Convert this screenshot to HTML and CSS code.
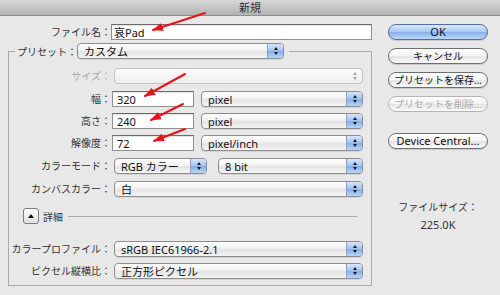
FILE: index.html
```html
<!DOCTYPE html>
<html lang="ja">
<head>
    <meta charset="UTF-8">
    <title>新規</title>
    <link rel="stylesheet" href="styles.css">
</head>
<body>
    <div class="titlebar">新規</div>

    <div class="dialog">
        <div class="main">
            <div class="row row-top">
                <label class="lbl" for="fname">ファイル名：</label>
                <input class="text-field fname" id="fname" type="text" value="哀Pad">
            </div>

            <fieldset class="group">
                <legend class="legend">
                    <div class="legend-inner">
                        <span class="legend-lbl">プリセット：</span>
                        <div class="popup preset">カスタム<span class="arrows"></span></div>
                    </div>
                </legend>

                <div class="row">
                    <span class="lbl off-lbl">サイズ：</span>
                    <div class="popup off grow"><span class="arrows"></span></div>
                </div>
                <div class="row">
                    <label class="lbl" for="w">幅：</label>
                    <input class="text-field num" id="w" type="text" value="320">
                    <div class="popup unit grow">pixel<span class="arrows"></span></div>
                </div>
                <div class="row tight">
                    <label class="lbl" for="h">高さ：</label>
                    <input class="text-field num" id="h" type="text" value="240">
                    <div class="popup unit grow">pixel<span class="arrows"></span></div>
                </div>
                <div class="row tight">
                    <label class="lbl" for="res">解像度：</label>
                    <input class="text-field num" id="res" type="text" value="72">
                    <div class="popup unit grow">pixel/inch<span class="arrows"></span></div>
                </div>
                <div class="row">
                    <span class="lbl">カラーモード：</span>
                    <div class="popup mode">RGB カラー<span class="arrows"></span></div>
                    <div class="popup depth grow">8 bit<span class="arrows"></span></div>
                </div>
                <div class="row">
                    <span class="lbl">カンバスカラー：</span>
                    <div class="popup grow">白<span class="arrows"></span></div>
                </div>

                <div class="row details">
                    <span class="toggle"></span>
                    <span class="details-text">詳細</span>
                    <span class="rule"></span>
                </div>

                <div class="row profile-row">
                    <span class="lbl">カラープロファイル：</span>
                    <div class="popup grow">sRGB IEC61966-2.1<span class="arrows"></span></div>
                </div>
                <div class="row tight">
                    <span class="lbl">ピクセル縦横比：</span>
                    <div class="popup grow">正方形ピクセル<span class="arrows"></span></div>
                </div>
            </fieldset>
        </div>

        <div class="side">
            <button class="btn ok">OK</button>
            <button class="btn">キャンセル</button>
            <button class="btn">プリセットを保存...</button>
            <button class="btn off">プリセットを削除...</button>
            <button class="btn btn-gap">Device Central...</button>

            <div class="fsize">ファイルサイズ：</div>
            <div class="fsize-val">225.0K</div>
        </div>
    </div>

    <!-- red annotation arrows drawn over the dialog -->
    <svg class="marks" viewBox="0 0 500 295" width="500" height="295">
        <defs>
            <marker id="head" viewBox="0 0 11 8" refX="10" refY="4" markerWidth="11" markerHeight="8" markerUnits="userSpaceOnUse" orient="auto">
                <path d="M0 0L11 4L0 8z" fill="#e8121a"/>
            </marker>
        </defs>
        <g stroke="#e8121a" stroke-width="2" stroke-linecap="round" marker-end="url(#head)">
            <line x1="205" y1="13" x2="153" y2="30"/>
            <line x1="185" y1="74" x2="145" y2="96"/>
            <line x1="183" y1="104" x2="151" y2="120"/>
            <line x1="185" y1="129" x2="154" y2="141"/>
        </g>
    </svg>
</body>
</html>
```

FILE: styles.css
```css
body {
    margin: 0;
    width: 500px;
    height: 295px;
    overflow: hidden;
    position: relative;
    background-color: #e8e8e8;
    font-family: "Noto Sans", "Noto Sans CJK JP", sans-serif;
    font-size: 11px;
    color: #222;
}

.titlebar {
    height: 15px;
    line-height: 15px;
    text-align: center;
    background: linear-gradient(#d8d8d8, #b3b3b3);
    border-bottom: 1px solid #8e8e8e;
    color: #333;
}

.dialog {
    display: flex;
    padding: 8px 0 0 8px;
}

.main {
    width: 364px;
}

.side {
    width: 100px;
    margin-left: 16px;
    display: flex;
    flex-direction: column;
}

/* form rows */

.row {
    display: flex;
    align-items: center;
    height: 16px;
    margin-top: 7px;
}

.row:first-of-type {
    margin-top: 0;
}

.row.tight {
    margin-top: 6px;
}

.row-top {
    margin-top: 0;
}

.lbl {
    flex: none;
    width: 102px;
    text-align: right;
    font-size: 10px;
    line-height: 16px;
    color: #333;
    white-space: nowrap;
}

.row-top .lbl {
    width: 103px;
}

.off-lbl {
    color: #a9a9a9;
}

.text-field {
    box-sizing: border-box;
    height: 16px;
    margin: 0;
    padding: 0 4px;
    border: 1px solid #8f8f8f;
    border-top-color: #6c6c6c;
    background: #fff;
    box-shadow: inset 0 1px 1px rgba(0, 0, 0, 0.12);
    font-family: "Noto Sans", "Noto Sans CJK JP", sans-serif;
    font-size: 11px;
    color: #111;
    outline: none;
}

.fname {
    width: 261px;
    padding-left: 2px;
}

.num {
    width: 82px;
    margin-left: 1px;
}

/* popup menus */

.popup {
    box-sizing: border-box;
    height: 16px;
    display: flex;
    align-items: center;
    margin-left: 3px;
    padding-left: 6px;
    border: 1px solid #8d8d8d;
    border-radius: 4px;
    background: linear-gradient(#ffffff, #f2f2f2 45%, #e3e3e3 55%, #f6f6f6);
    box-shadow: 0 1px 0 rgba(0, 0, 0, 0.08);
    color: #111;
    white-space: nowrap;
    overflow: hidden;
}

.grow {
    flex: 1;
}

.popup .arrows {
    flex: none;
    align-self: stretch;
    width: 15px;
    margin-left: auto;
    display: flex;
    flex-direction: column;
    align-items: center;
    justify-content: center;
    gap: 2px;
    background: linear-gradient(#d6e5fa, #a2c2f1 50%, #82abea 50%, #bad6f8);
    border-left: 1px solid #8aa0c8;
}

.popup .arrows::before,
.popup .arrows::after {
    content: "";
    border-left: 2px solid transparent;
    border-right: 2px solid transparent;
}

.popup .arrows::before {
    border-bottom: 3px solid #1a1a1a;
}

.popup .arrows::after {
    border-top: 3px solid #1a1a1a;
}

.popup.off {
    border-color: #c4c4c4;
    background: linear-gradient(#fbfbfb, #efefef);
    box-shadow: none;
}

.popup.off .arrows {
    background: none;
    border-left: none;
}

.popup.off .arrows::before {
    border-bottom-color: #a5a5a5;
}

.popup.off .arrows::after {
    border-top-color: #a5a5a5;
}

.unit {
    margin-left: 7px;
}

.mode {
    width: 93px;
}

.depth {
    margin-left: 11px;
}

/* preset group */

.group {
    margin: 3px 0 0;
    padding: 9px 8px 6px 0;
    border: 1px solid #a9a9a9;
    min-width: 0;
}

.legend {
    margin-left: 6px;
    padding: 0 5px 0 2px;
}

.legend-inner {
    display: flex;
    align-items: center;
    height: 16px;
}

.legend-lbl {
    font-size: 10px;
    color: #333;
    white-space: nowrap;
}

.preset {
    width: 207px;
    margin-left: 0;
}

.details {
    margin-top: 11px;
    padding-left: 14px;
}

.toggle {
    box-sizing: border-box;
    flex: none;
    width: 16px;
    height: 16px;
    display: flex;
    align-items: center;
    justify-content: center;
    border: 1px solid #7a7a7a;
    border-radius: 3px;
    background: linear-gradient(#ffffff, #dedede);
}

.toggle::before {
    content: "";
    border-left: 3px solid transparent;
    border-right: 3px solid transparent;
    border-bottom: 4px solid #111;
    margin-top: -1px;
}

.details-text {
    margin-left: 4px;
    font-size: 10px;
    color: #333;
}

.rule {
    flex: 1;
    height: 1px;
    margin: 0 6px 0 5px;
    background-color: #a9a9a9;
}

.profile-row {
    margin-top: 17px;
}

/* buttons */

.btn {
    box-sizing: border-box;
    height: 16px;
    margin: 8px 0 0;
    padding: 0;
    border: 1px solid #6f6f6f;
    border-radius: 8px;
    background: linear-gradient(#ffffff, #f4f4f4 50%, #e4e4e4 50%, #fafafa);
    box-shadow: 0 1px 1px rgba(0, 0, 0, 0.15);
    font-family: "Noto Sans", "Noto Sans CJK JP", sans-serif;
    font-size: 10px;
    line-height: 14px;
    color: #111;
    white-space: nowrap;
    overflow: hidden;
}

.btn.ok {
    margin-top: 0;
    font-size: 11px;
    border-color: #506f9e;
    background: linear-gradient(#d8e7fb, #a8c7f1 50%, #86aeea 50%, #bdd8f8);
}

.btn.off {
    color: #a8a8a8;
    border-color: #b5b5b5;
    box-shadow: none;
}

.btn-gap {
    margin-top: 21px;
    font-size: 11px;
}

.fsize {
    margin-top: 52px;
    text-align: center;
    font-size: 10px;
    line-height: 12px;
    color: #333;
}

.fsize-val {
    margin-top: 6px;
    text-align: center;
    line-height: 12px;
    color: #333;
}

.marks {
    position: absolute;
    left: 0;
    top: 0;
    pointer-events: none;
}
```
